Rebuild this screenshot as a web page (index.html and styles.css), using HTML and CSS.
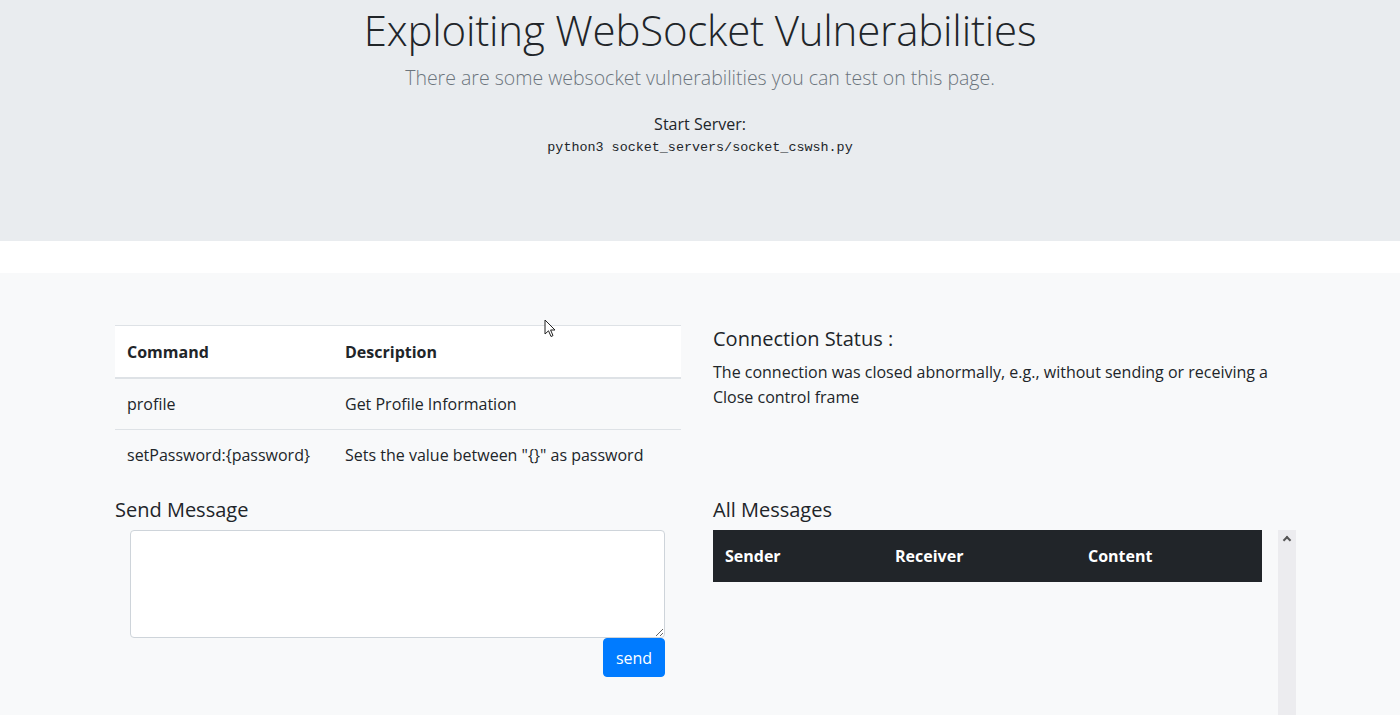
FILE: index.html
```html
<!DOCTYPE html>
<html>
<head>
<meta charset="utf-8">
<title>Exploiting WebSocket Vulnerabilities</title>
<link rel="stylesheet" href="styles.css">
</head>
<body>
<header class="jumbo">
  <h1 class="title">Exploiting WebSocket Vulnerabilities</h1>
  <p class="lead">There are some websocket vulnerabilities you can test on this page.</p>
  <p class="start">Start Server:</p>
  <code class="cmd">python3 socket_servers/socket_cswsh.py</code>
</header>
<div class="spacer"></div>
<main class="main">
  <div class="grid">
    <section class="left">
      <table class="cmd-table">
        <thead>
          <tr><th class="c1">Command</th><th>Description</th></tr>
        </thead>
        <tbody>
          <tr><td class="c1">profile</td><td>Get Profile Information</td></tr>
          <tr><td class="c1">setPassword:{password}</td><td>Sets the value between "{}" as password</td></tr>
        </tbody>
      </table>
    </section>
    <section class="right">
      <h5 class="status-title">Connection Status :</h5>
      <p class="status-text">The connection was closed abnormally, e.g., without sending or receiving a Close control frame</p>
    </section>
    <section class="left send">
      <h4 class="sub">Send Message</h4>
      <div class="form">
        <textarea class="msg"></textarea>
        <div class="btn-row"><button class="btn">send</button></div>
      </div>
    </section>
    <section class="right">
      <h4 class="sub">All Messages</h4>
      <div class="scroll">
        <table class="msg-table">
          <thead>
            <tr><th class="m1">Sender</th><th class="m2">Receiver</th><th>Content</th></tr>
          </thead>
        </table>
        <div class="scrollbar"><span class="arrow"></span></div>
      </div>
    </section>
  </div>
  <svg class="cursor" width="14" height="20" viewBox="0 0 14 20"><path d="M1 1 L1 15 L4.5 11.8 L7 17.5 L9 16.6 L6.6 11 L11 11 Z" fill="#fff" stroke="#222" stroke-width="1"/></svg>
</main>
</body>
</html>
```

FILE: styles.css
```css
* { box-sizing: border-box; }
html, body { margin: 0; padding: 0; }
body {
  font-family: "Open Sans", "Noto Sans", sans-serif;
  font-size: 16px;
  line-height: 1.5;
  color: #212529;
  background: #f8f9fa;
  height: 715px;
  overflow: hidden;
}
.jumbo {
  background: #e9ecef;
  height: 241px;
  text-align: center;
  padding-top: 0;
}
.title {
  margin: 0;
  font-weight: 300;
  font-size: 42px;
  line-height: 60px;
  letter-spacing: -0.2px;
}
.lead {
  margin: 0;
  font-size: 19.5px;
  font-weight: 300;
  color: #6c757d;
  line-height: 36px;
}
.start {
  margin: 16px 0 0;
  font-size: 16px;
  line-height: 24px;
}
.cmd {
  display: block;
  margin-top: 2px;
  font-family: "Liberation Mono", "DejaVu Sans Mono", monospace;
  font-size: 13.4px;
  line-height: 20px;
  color: #212529;
}
.spacer { height: 32px; background: #fff; }
.main { position: relative; padding: 52px 0 0 115px; }
.grid {
  display: grid;
  grid-template-columns: 566px 583px;
  column-gap: 32px;
}
.cmd-table, .msg-table {
  border-collapse: collapse;
  width: 100%;
}
.cmd-table th, .cmd-table td {
  text-align: left;
  padding: 13px 12px;
  line-height: 24px;
  vertical-align: top;
}
.cmd-table thead th {
  background: #fff;
  font-weight: 700;
  padding-top: 14px;
  border-top: 1px solid #dee2e6;
  border-bottom: 2px solid #dee2e6;
}
.cmd-table tbody td { border-top: 1px solid #dee2e6; }
.cmd-table tbody tr:first-child td { border-top: 0; }
.c1 { width: 218px; }
.status-title {
  margin: 0;
  font-size: 20px;
  font-weight: 400;
  line-height: 28px;
  padding-top: 0;
}
.status-text {
  margin: 7px 0 0;
  line-height: 25px;
  padding-right: 10px;
}
.sub {
  margin: 15px 0 0;
  font-size: 20px;
  font-weight: 400;
  line-height: 30px;
  height: 35px;
}
.form { padding: 0 16px 0 15px; }
.msg {
  display: block;
  width: 100%;
  height: 108px;
  border: 1px solid #ced4da;
  border-radius: 4px;
  background: #fff;
  resize: vertical;
  font: inherit;
  margin: 0;
}
.btn-row { display: flex; justify-content: flex-end; }
.btn {
  width: 62px;
  height: 39px;
  background: #007bff;
  color: #fff;
  border: 1px solid #007bff;
  border-radius: 4px;
  font: inherit;
  font-size: 16px;
  padding: 0;
}
.scroll { display: flex; gap: 16px; align-items: flex-start; }
.msg-table { width: 549px; background: #212529; color: #fff; }
.msg-table th {
  text-align: left;
  padding: 14px 12px;
  line-height: 24px;
  font-weight: 700;
}
.m1 { width: 170px; }
.m2 { width: 193px; }
.scrollbar {
  width: 18px;
  height: 200px;
  background: #ececef;
  position: relative;
  flex: none;
}
.arrow {
  position: absolute;
  left: 6px;
  top: 7px;
  width: 6px;
  height: 6px;
  border-left: 2px solid #555;
  border-top: 2px solid #555;
  transform: rotate(45deg);
}
.cursor { position: absolute; left: 544px; top: 46px; }
```
